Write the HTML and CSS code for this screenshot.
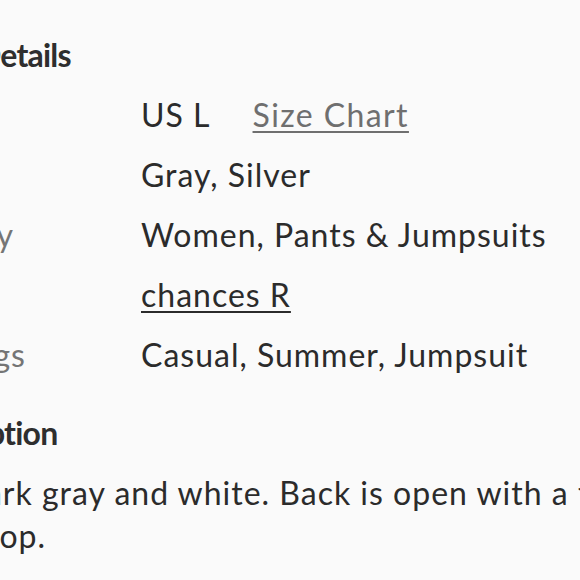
FILE: index.html
```html
<!DOCTYPE html>
<html lang="en">
<head>
<meta charset="utf-8">
<title>Listing details</title>
<link rel="stylesheet" href="styles.css">
</head>
<body>
<main class="listing">
  <section class="details">
    <h2 class="section-title title-details">Details</h2>
    <dl class="detail-grid">
      <dt class="label">Size</dt>
      <dd class="value"><span class="size">US L</span><a class="size-chart" href="#">Size Chart</a></dd>
      <dt class="label">Color</dt>
      <dd class="value">Gray, Silver</dd>
      <dt class="label">Category</dt>
      <dd class="value">Women, Pants &amp; Jumpsuits</dd>
      <dt class="label">Brand</dt>
      <dd class="value"><a class="brand" href="#">chances R</a></dd>
      <dt class="label">Style Tags</dt>
      <dd class="value">Casual, Summer, Jumpsuit</dd>
    </dl>
  </section>
  <section class="description">
    <h2 class="section-title title-desc">Description</h2>
    <p class="desc-text">Dark gray and white. Back is open with a tie at the top.</p>
  </section>
</main>
</body>
</html>
```
FILE: styles.css
```css
html, body {
  margin: 0;
  padding: 0;
  background: #fafafa;
}
body {
  width: 580px;
  height: 580px;
  overflow: hidden;
  font-family: "Lato", "Noto Sans", sans-serif;
  color: #2b2b2b;
}
.listing {
  margin-left: -122px;
  width: 900px;
  padding-top: 37px;
}
.section-title {
  margin: 0;
  font-size: 32px;
  font-weight: 700;
  line-height: 36px;
  letter-spacing: -0.8px;
  color: #2e2e2e;
}
.title-details {
  margin-left: 99px;
}
.detail-grid {
  display: grid;
  grid-template-columns: 263px 1fr;
  grid-auto-rows: 60px;
  align-items: center;
  margin: 11px 0 0 0;
  font-size: 32px;
  letter-spacing: 1px;
}
.label {
  margin: 0;
  color: #757575;
}
.value {
  margin: 0;
  color: #2b2b2b;
}
.size-chart {
  margin-left: 42px;
  letter-spacing: 1.4px;
  color: #6f6f6f;
  text-decoration: underline;
  text-underline-offset: 4px;
  text-decoration-thickness: 2px;
}
.brand {
  color: #2b2b2b;
  text-decoration: underline;
  text-underline-offset: 4px;
  text-decoration-thickness: 2px;
}
.description {
  margin-top: 31px;
}
.title-desc {
  margin-left: 23px;
}
.desc-text {
  margin: 20px 0 0 109px;
  width: 756px;
  font-size: 32px;
  line-height: 43px;
  letter-spacing: 1px;
  text-indent: -26px;
  color: #2b2b2b;
}
```
